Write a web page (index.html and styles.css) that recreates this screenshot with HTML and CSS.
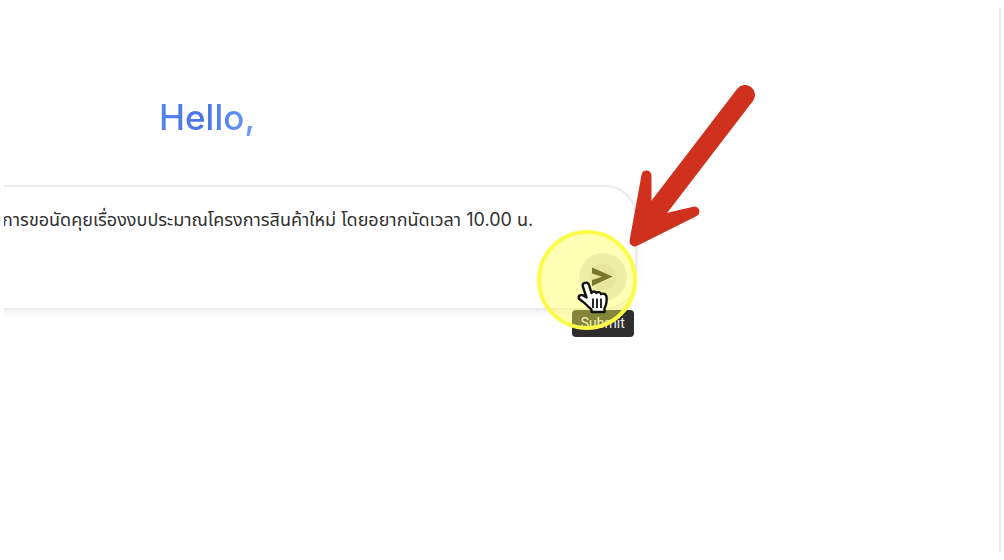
FILE: index.html
```html
<!DOCTYPE html>
<html lang="th">
<head>
<meta charset="utf-8">
<meta name="viewport" content="width=device-width, initial-scale=1">
<title>Hello</title>
<link rel="stylesheet" href="styles.css">
</head>
<body>
<main class="page">
  <h1 class="greeting"><span class="greeting-text">Hello,</span></h1>
  <div class="stage">
    <form class="composer">
      <input class="prompt" type="text" aria-label="Prompt" value="การขอนัดคุยเรื่องงบประมาณโครงการสินค้าใหม่ โดยอยากนัดเวลา 10.00 น.">
      <div class="actions">
        <button class="submit" type="button" aria-label="Submit" aria-describedby="submit-tip">
          <svg class="submit-icon" viewBox="0 0 22 20" aria-hidden="true"><path d="M0 .5 20.500 9.500 0 19V13L10 9.800 0 6.500Z" fill="#161616"/></svg>
        </button>
      </div>
    </form>
    <div class="tooltip" id="submit-tip" role="tooltip">Submit</div>
    <svg class="pointer-mark" viewBox="0 0 220 250" aria-hidden="true">
      <circle cx="50" cy="196" r="48" fill="#ffff50" fill-opacity=".42" stroke="#fcfc48" stroke-width="4"/>
      <path d="M208 11 116 131" fill="none" stroke="#d0311e" stroke-width="20" stroke-linecap="round"/>
      <path d="M109.500 91.500 97.500 157.500 157.500 127.500 125 135 109.500 126Z" fill="#d0311e" stroke="#d0311e" stroke-width="10" stroke-linejoin="round"/>
      <g transform="translate(41 197)">
        <path d="M6.500 2C8.500 1 10.500 2 11.200 4.500L13.500 12C14.500 10 17.300 10 18.300 12 19.800 10.500 22.300 11 23 13 25 12 28 13 28.500 15.500 29 20 28 24.500 26.500 27.500V31H13.500V28.500C11 26.500 8.500 24 6.500 22 4.500 20 1.500 19 .8 17 .2 14.500 3 13.300 5.300 14.500L8.500 16.500 5 6C4.300 4 5 2.500 6.500 2Z" fill="#fff" stroke="#111" stroke-width="2.400" stroke-linejoin="round"/>
        <path d="M15 17.500V27M19 17.500V27M23 17.500V27" stroke="#111" stroke-width="1.800"/>
      </g>
    </svg>
  </div>
</main>
</body>
</html>
```
FILE: styles.css
```css
* {
  box-sizing: border-box;
}

body {
  margin: 0;
  padding: 8px 3px 8px 4px;
  min-height: 100vh;
  display: flex;
  background: #fff;
  color: #303030;
  font-family: Inter, "Noto Sans Thai", "Noto Sans", sans-serif;
}

.page {
  flex: 1;
  min-width: 0;
  padding-top: 87px;
  border-right: 2px solid #ececec;
  overflow: hidden;
}

.greeting {
  margin: 0 0 46px 155px;
  font: 500 35px/44px Inter, sans-serif;
}

.greeting-text {
  background: linear-gradient(90deg, #5682f0, #4874e8 45%, #6a9cfb);
  background-clip: text;
  color: transparent;
}

.stage {
  position: relative;
  width: 63.6%;
}

.composer {
  display: flex;
  flex-direction: column;
  gap: 18px;
  margin-left: -40px;
  padding: 18px 8px 7px 36px;
  border: 2px solid #ebebeb;
  border-radius: 32px;
  box-shadow: 0 3px 6px #0000000f;
}

.prompt {
  width: 100%;
  height: 30px;
  padding: 0;
  border: 0;
  outline: 0;
  background: transparent;
  color: inherit;
  font: 18px/30px Inter, "Noto Sans Thai", "Noto Sans", sans-serif;
}

.actions {
  display: flex;
  justify-content: flex-end;
}

.submit {
  display: grid;
  place-items: center;
  width: 48px;
  height: 48px;
  padding: 0;
  border: 0;
  border-radius: 50%;
  background: radial-gradient(circle, #d4d5d8 0 13px, #e2e3e6 14px);
}

.submit-icon {
  width: 22px;
  height: 20px;
}

.tooltip {
  position: absolute;
  right: 3px;
  top: 100%;
  padding: 0 9px;
  border-radius: 4px;
  background: #2d2d2d;
  color: #eee;
  font: 14px/27px Roboto, sans-serif;
}

.pointer-mark {
  position: absolute;
  top: -101px;
  right: -120px;
  width: 220px;
  height: 250px;
}
```
